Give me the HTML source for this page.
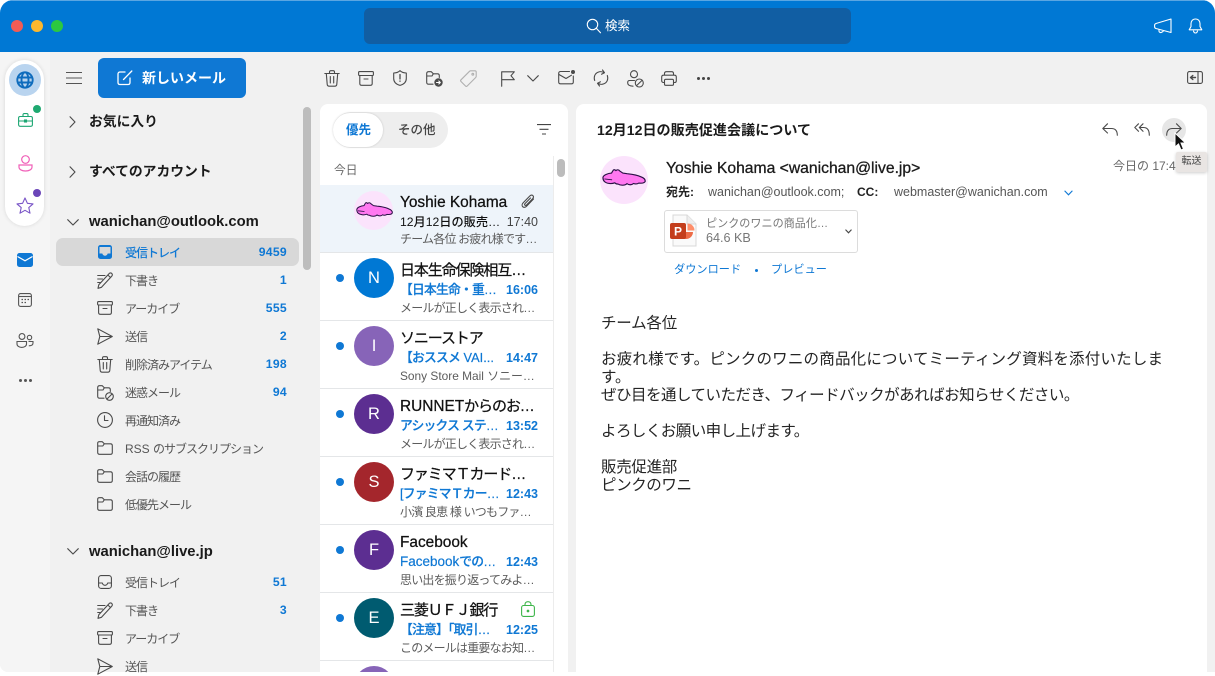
<!DOCTYPE html>
<html lang="ja"><head><meta charset="utf-8"><title>Outlook</title>
<style>
html,body{margin:0;padding:0;background:#fff}
body{width:1215px;height:672px;overflow:hidden;position:relative;font-family:"Liberation Sans","Noto Sans CJK JP",sans-serif;color:#1a1a1a}
.a{position:absolute;white-space:nowrap}
.t{position:absolute;white-space:nowrap;line-height:18px;height:18px}
svg{position:absolute;overflow:visible}
.ic{fill:none;stroke:#4a4a4a;stroke-width:1.1;stroke-linecap:round;stroke-linejoin:round}
.fl{font-size:12px;letter-spacing:-1px;margin-top:.5px;color:#555;left:125px}
.l0{letter-spacing:0}
.ct{font-size:12.2px;font-weight:700;color:#0f78d4;right:928px;letter-spacing:.3px}
.row{position:absolute;left:320px;width:233px;height:67px;border-bottom:1.5px solid #e4e6e8;background:#fff}
.av{position:absolute;left:354px;width:40px;height:40px;border-radius:50%;color:#fff;font-size:16.5px;line-height:40px;text-align:center}
.dot{position:absolute;left:336px;width:8px;height:8px;border-radius:50%;background:#0f78d4}
.nm{font-size:15px;letter-spacing:-1.1px;margin-top:-.5px;color:#111;left:400px;-webkit-text-stroke:.25px #111}
.la{font-size:15.4px;letter-spacing:0}
.sb{font-size:12.8px;letter-spacing:-.8px;margin-top:-.5px;font-weight:500;color:#0f78d4;left:400px;-webkit-text-stroke:.2px #0f78d4}
.tm{font-size:12.5px;font-weight:700;color:#0f78d4;right:677px;margin-top:-.5px}
.pv{font-size:12px;letter-spacing:-.8px;margin-top:-.5px;color:#5c5c5c;left:400px}
.bd{font-size:15.5px;color:#242424;left:601px}
</style></head><body>

<!-- window -->
<div class="a" style="left:0;top:0;width:1215px;height:672px;border-radius:13px 13px 0 8px;background:#f1f1f1;overflow:hidden">
  <div class="a" style="left:0;top:0;width:1215px;height:52px;background:#0078d4;border-top:1px solid #5aa6e2;box-sizing:border-box"></div>
  <div class="a" style="left:0;top:52px;width:50px;height:620px;background:#f5f5f5"></div>
</div>

<!-- traffic lights -->
<div class="a" style="left:11px;top:20px;width:12px;height:12px;border-radius:50%;background:#f25c54"></div>
<div class="a" style="left:31px;top:20px;width:12px;height:12px;border-radius:50%;background:#fdb82e"></div>
<div class="a" style="left:51px;top:20px;width:12px;height:12px;border-radius:50%;background:#2cc840"></div>

<!-- search -->
<div class="a" style="left:364px;top:8px;width:487px;height:36px;border-radius:6px;background:#115ea3"></div>
<svg style="left:586px;top:18px" width="16" height="16" viewBox="0 0 16 16" fill="none" stroke="#fff" stroke-width="1.1" stroke-linecap="round"><circle cx="6.500" cy="6.500" r="5.200"/><path d="M10.300 10.300L14.500 14.800"/></svg>
<div class="t" style="left:605px;top:17px;font-size:12.5px;color:#fff">検索</div>

<!-- title right icons -->
<svg style="left:1154px;top:18px" width="18" height="16" viewBox="0 0 18 16" fill="none" stroke="#fff" stroke-width="1.1" stroke-linejoin="round"><path d="M17 1L2 5.500C1 5.800.6 6.300.6 7.300V8.700C.6 9.700 1 10.200 2 10.500L17 14.500Z"/><path d="M5 11.300V13C5 14 6 14.800 7.200 14.500L9.500 13.300"/></svg>
<svg style="left:1188px;top:18px" width="15" height="16" viewBox="0 0 15 16" fill="none" stroke="#fff" stroke-width="1.1" stroke-linejoin="round" stroke-linecap="round"><path d="M7.500 1C4.700 1 3 3 3 5.600V8.500L1.200 11.800H13.800L12 8.500V5.600C12 3 10.300 1 7.500 1Z"/><path d="M5.500 13C5.800 14.300 6.500 15 7.500 15S9.200 14.300 9.500 13"/></svg>

<!-- app rail pill -->
<div class="a" style="left:5px;top:60px;width:39px;height:166px;border-radius:20px;background:#fff;box-shadow:0 0 4px rgba(0,0,0,.12)"></div>
<div class="a" style="left:9px;top:64px;width:32px;height:32px;border-radius:50%;background:#b9d4ef"></div>
<svg style="left:16px;top:71px" width="18" height="18" viewBox="0 0 18 18" fill="none" stroke="#0f6cbd" stroke-width="1.900"><circle cx="9" cy="9" r="7.700"/><ellipse cx="9" cy="9" rx="3.500" ry="7.700"/><path d="M1.500 6.500H16.500M1.500 11.500H16.500"/></svg>
<svg style="left:18px;top:113px" width="15" height="14" viewBox="0 0 15 14" fill="none" stroke="#1ba672" stroke-width="1.100"><rect x=".6" y="3.500" width="13.800" height="9.800" rx="1.500"/><path d="M5 3.500V1.800C5 1 5.500.6 6.200.6H8.800C9.500.6 10 1 10 1.800V3.500M.6 8H14.400"/><rect x="6.500" y="7" width="2" height="2" fill="#1ba672"/></svg>
<div class="a" style="left:33px;top:105px;width:8px;height:8px;border-radius:50%;background:#1fa971"></div>
<svg style="left:18px;top:155px" width="15" height="17" viewBox="0 0 15 17" fill="none" stroke="#f060b8" stroke-width="1.200"><circle cx="7.500" cy="4.500" r="3.800"/><path d="M1 10H14V12C14 14.500 11 16 7.500 16S1 14.500 1 12Z"/></svg>
<svg style="left:16px;top:197px" width="18" height="17" viewBox="0 0 18 17" fill="none" stroke="#7a55c7" stroke-width="1.100" stroke-linejoin="round"><path d="M9 1L11.400 6.300L17 6.900L12.800 10.600L14 16.200L9 13.300L4 16.200L5.200 10.600L1 6.900L6.600 6.300Z"/></svg>
<div class="a" style="left:33px;top:189px;width:8px;height:8px;border-radius:50%;background:#6b45b8"></div>

<!-- rail lower icons -->
<svg style="left:17px;top:253px" width="16" height="14" viewBox="0 0 16 14"><rect width="16" height="14" rx="2.500" fill="#0f78d4"/><path d="M.5 3.500L8 7.800L15.500 3.500" fill="none" stroke="#fff" stroke-width="1.200"/></svg>
<svg style="left:18px;top:293px" width="14" height="14" viewBox="0 0 14 14" fill="none" stroke="#555" stroke-width="1.100"><rect x=".6" y=".6" width="12.800" height="12.800" rx="2"/><path d="M.6 3.500H13.400"/><path d="M3.500 6.500H5M6.500 6.500H8M9.500 6.500H11M3.500 9.500H5M6.500 9.500H8" stroke-width="1.300"/></svg>
<svg style="left:16px;top:333px" width="18" height="15" viewBox="0 0 18 15" fill="none" stroke="#555" stroke-width="1.100"><circle cx="6" cy="3.500" r="2.900"/><circle cx="13.500" cy="4.500" r="2.200"/><path d="M1 8.500H10.500V11C10.500 13 8.500 14.400 5.800 14.400S1 13 1 11Z"/><path d="M12.500 8.500H17V10C17 11.800 15.500 12.800 12.800 12.800"/></svg>
<div class="a" style="left:19px;top:379px;width:3px;height:3px;border-radius:50%;background:#555;box-shadow:5px 0 0 #555,10px 0 0 #555"></div>

<!-- hamburger + new mail -->
<svg style="left:66px;top:72px" width="16" height="12" viewBox="0 0 16 12" stroke="#555" stroke-width="1.100"><path d="M0 .5H16M0 6H16M0 11.500H16"/></svg>
<div class="a" style="left:98px;top:58px;width:148px;height:40px;border-radius:6px;background:#0f78d4"></div>
<svg style="left:117px;top:70px" width="16" height="16" viewBox="0 0 16 16" fill="none" stroke="#fff" stroke-width="1.300" stroke-linecap="round"><path d="M8 2H3C1.800 2 1 2.800 1 4V12.500C1 13.700 1.800 14.500 3 14.500H11C12.200 14.500 13 13.700 13 12.500V8"/><path d="M6.500 9.500L14.800 1"/></svg>
<div class="t" style="left:142px;top:69px;font-size:14px;font-weight:700;color:#fff">新しいメール</div>

<!-- toolbar icons -->
<svg class="ic" style="left:324px;top:70px" width="16" height="17" viewBox="0 0 16 17"><path d="M.8 3.500H15.200M5.500 3.500V2C5.500 1.200 6 .7 6.800.7H9.200C10 .7 10.500 1.200 10.500 2V3.500M2.300 3.500L3.200 14.300C3.300 15.500 4 16.200 5.200 16.200H10.800C12 16.200 12.700 15.500 12.800 14.300L13.700 3.500M6.300 6.500V13M9.700 6.500V13"/></svg>
<svg class="ic" style="left:358px;top:71px" width="16" height="15" viewBox="0 0 16 15"><rect x=".6" y=".6" width="14.800" height="3.900" rx="1"/><path d="M1.800 4.500V12.500C1.800 13.600 2.500 14.300 3.600 14.300H12.400C13.500 14.300 14.200 13.600 14.200 12.500V4.500M6 8H10"/></svg>
<svg class="ic" style="left:393px;top:70px" width="14" height="16" viewBox="0 0 14 16"><path d="M7 .7C5 2.500 3 3 .7 3V8.500C.7 12 3 14.300 7 15.400C11 14.300 13.300 12 13.300 8.500V3C11 3 9 2.500 7 .7Z"/><path d="M7 4.500V9M7 11V11.300" stroke-width="1.300"/></svg>
<svg class="ic" style="left:426px;top:71px" width="17" height="16" viewBox="0 0 17 16"><path d="M7 13.200H2.500C1.400 13.200.7 12.500.7 11.400V2.500C.7 1.400 1.400.7 2.500.7H5.300L7.300 2.800H11.500C12.600 2.800 13.300 3.500 13.300 4.600V6.500M.7 5H6L7.300 2.800"/><circle cx="12.500" cy="11.500" r="4.200" fill="#4a4a4a" stroke="none"/><path d="M10.500 11.500H14.200M12.800 10L14.300 11.500L12.800 13" stroke="#fff"/></svg>
<svg style="left:460px;top:70px" width="17" height="17" viewBox="0 0 17 17" fill="none" stroke="#b0b0b0" stroke-width="1.100" stroke-linejoin="round"><path d="M1 9.800L9.500 1.300C9.800 1 10.200.8 10.600.8H15C15.700.8 16.200 1.300 16.200 2V6.400C16.200 6.800 16 7.200 15.700 7.500L7.200 16C6.700 16.500 6 16.500 5.500 16L1 11.500C.5 11 .5 10.300 1 9.800Z"/><circle cx="12.800" cy="4.200" r=".9"/></svg>
<svg class="ic" style="left:501px;top:71px" width="14" height="16" viewBox="0 0 14 16"><path d="M.7 15.300V.8H13.300L10 4.700L13.300 8.700H.7"/></svg>
<svg class="ic" style="left:527px;top:75px" width="12" height="7" viewBox="0 0 12 7"><path d="M.7.7L6 6L11.300.7"/></svg>
<svg class="ic" style="left:558px;top:70px" width="18" height="15" viewBox="0 0 18 15"><path d="M11.500 1.500H2.500C1.400 1.500.7 2.200.7 3.300V12C.7 13.100 1.400 13.800 2.500 13.800H13.500C14.600 13.800 15.300 13.100 15.300 12V6"/><path d="M1 4.500L8 8.500L13.500 5.200"/><circle cx="15" cy="2" r="2" fill="#4a4a4a" stroke="none"/></svg>
<svg class="ic" style="left:593px;top:69px" width="16" height="18" viewBox="0 0 16 18"><path d="M1.700 11.500C.5 8 1.800 4.500 5 3.200C7 2.400 9.500 2.600 11 3.800M9.500 1L11.500 3.700L8.500 5.200M14.300 6.500C15.500 10 14.200 13.500 11 14.800C9 15.600 6.500 15.400 5 14.200M6.500 17L4.500 14.300L7.500 12.800"/></svg>
<svg class="ic" style="left:627px;top:70px" width="17" height="18" viewBox="0 0 17 18"><circle cx="7" cy="4.200" r="3.500"/><path d="M7.500 10.500H2.500C1.400 10.500.7 11.200.7 12.300V13C.7 14.800 2.500 16 6 16.200"/><circle cx="12.300" cy="13" r="4"/><path d="M9.700 15.500L14.900 10.500"/></svg>
<svg class="ic" style="left:661px;top:71px" width="16" height="15" viewBox="0 0 16 15"><path d="M3.500 4V2.500C3.500 1.400 4.200.7 5.300.7H10.700C11.800.7 12.500 1.400 12.500 2.500V4"/><path d="M3.500 11.500H2.500C1.400 11.500.7 10.800.7 9.700V6C.7 4.900 1.400 4.200 2.500 4.200H13.500C14.600 4.200 15.300 4.900 15.300 6V9.700C15.300 10.800 14.600 11.500 13.500 11.500H12.500"/><rect x="3.500" y="8.300" width="9" height="6" rx="1.200"/></svg>
<div class="a" style="left:697px;top:77px;width:3px;height:3px;border-radius:50%;background:#444;box-shadow:5px 0 0 #444,10px 0 0 #444"></div>
<svg class="ic" style="left:1187px;top:71px" width="16" height="13" viewBox="0 0 16 13"><rect x=".6" y=".6" width="14.800" height="11.800" rx="1.800"/><path d="M11 .6V12.400"/><path d="M8.500 6.500H3.500M5.800 4.500L3.500 6.500L5.800 8.500" stroke-width="1.400"/></svg>

<!-- folder pane -->
<div class="a" style="left:303px;top:107px;width:8px;height:163px;border-radius:4px;background:#bdbdbd"></div>
<svg class="ic" style="left:69px;top:116px" width="7" height="12" viewBox="0 0 7 12"><path d="M1 .8L6 6L1 11.200"/></svg>
<div class="t" style="left:89px;top:113px;font-size:13.8px;font-weight:700">お気に入り</div>
<svg class="ic" style="left:69px;top:166px" width="7" height="12" viewBox="0 0 7 12"><path d="M1 .8L6 6L1 11.200"/></svg>
<div class="t" style="left:89px;top:163px;font-size:13.8px;font-weight:700">すべてのアカウント</div>
<svg class="ic" style="left:67px;top:219px" width="12" height="7" viewBox="0 0 12 7"><path d="M.7.7L6 6L11.300.7"/></svg>
<div class="t" style="left:89px;top:213px;font-size:14.8px;font-weight:700">wanichan@outlook.com</div>

<div class="a" style="left:56px;top:238px;width:243px;height:28px;border-radius:7px;background:#d8d8d8"></div>
<svg style="left:98px;top:245px" width="14" height="14" viewBox="0 0 14 14"><rect width="14" height="14" rx="2.500" fill="#0f78d4"/><path d="M1.500 8.500H4.300C4.800 10 5.700 10.700 7 10.700S9.200 10 9.700 8.500H12.500V2H1.500Z" fill="#d8d8d8"/></svg>
<div class="t fl" style="top:243px;color:#0f78d4;font-weight:500">受信トレイ</div><div class="t ct" style="top:243px">9459</div>

<svg class="ic" style="left:97px;top:272px" width="16" height="17" viewBox="0 0 16 17"><path d="M.7 3.500H8M.7 7H5.500M.7 10.500H3.500M1 16.300L1.800 12.800L12 1.700C12.800.8 14 .7 14.800 1.500C15.600 2.300 15.500 3.400 14.700 4.200L4.500 15.300L1 16.300ZM10.800 3L13.500 5.500"/></svg>
<div class="t fl" style="top:271px">下書き</div><div class="t ct" style="top:271px">1</div>

<svg class="ic" style="left:97px;top:301px" width="16" height="14" viewBox="0 0 16 14"><rect x=".6" y=".6" width="14.800" height="3.400" rx="1"/><path d="M1.600 4V11.500C1.600 12.600 2.300 13.300 3.400 13.300H12.600C13.700 13.300 14.400 12.600 14.400 11.500V4M6 7.500H10"/></svg>
<div class="t fl" style="top:299px">アーカイブ</div><div class="t ct" style="top:299px">555</div>

<svg class="ic" style="left:97px;top:328px" width="16" height="17" viewBox="0 0 16 17"><path d="M.8.8L15.300 8.500L.8 16.200L2.800 8.500ZM2.800 8.500H15.300"/></svg>
<div class="t fl" style="top:327px">送信</div><div class="t ct" style="top:327px">2</div>

<svg class="ic" style="left:97px;top:356px" width="16" height="17" viewBox="0 0 16 17"><path d="M.8 3.500H15.200M5.500 3.500V2C5.500 1.200 6 .7 6.800.7H9.200C10 .7 10.500 1.200 10.500 2V3.500M2.300 3.500L3.200 14.300C3.300 15.500 4 16.200 5.200 16.200H10.800C12 16.200 12.700 15.500 12.800 14.300L13.700 3.500M6.300 6.500V13M9.700 6.500V13"/></svg>
<div class="t fl" style="top:355px">削除済みアイテム</div><div class="t ct" style="top:355px">198</div>

<svg class="ic" style="left:97px;top:385px" width="17" height="16" viewBox="0 0 17 16"><path d="M7 13.200H2.500C1.400 13.200.7 12.500.7 11.400V2.500C.7 1.400 1.400.7 2.500.7H5.300L7.300 2.800H11.500C12.600 2.800 13.300 3.500 13.300 4.600V6.500M.7 5H6L7.300 2.800"/><circle cx="12.500" cy="11.500" r="3.800"/><path d="M10 14L15 9"/></svg>
<div class="t fl" style="top:383px">迷惑メール</div><div class="t ct" style="top:383px">94</div>

<svg class="ic" style="left:97px;top:412px" width="16" height="16" viewBox="0 0 16 16"><circle cx="8" cy="8" r="7.400"/><path d="M7.500 3.800V8.500H11"/></svg>
<div class="t fl" style="top:411px">再通知済み</div>

<svg class="ic" style="left:97px;top:441px" width="16" height="14" viewBox="0 0 16 14"><path d="M.7 11.500V2C.7 1.200 1.300.7 2.300.7H5.300L7.300 2.800H13.500C14.600 2.800 15.300 3.500 15.300 4.600V11.500C15.300 12.600 14.600 13.300 13.500 13.300H2.500C1.400 13.300.7 12.600.7 11.500ZM.7 5H5.800L7.300 2.800"/></svg>
<div class="t fl" style="top:439px"><span class="l0">RSS </span>のサブスクリプション</div>
<svg class="ic" style="left:97px;top:469px" width="16" height="14" viewBox="0 0 16 14"><path d="M.7 11.500V2C.7 1.200 1.300.7 2.300.7H5.300L7.300 2.800H13.500C14.600 2.800 15.300 3.500 15.300 4.600V11.500C15.300 12.600 14.600 13.300 13.500 13.300H2.500C1.400 13.300.7 12.600.7 11.500ZM.7 5H5.800L7.300 2.800"/></svg>
<div class="t fl" style="top:467px">会話の履歴</div>
<svg class="ic" style="left:97px;top:497px" width="16" height="14" viewBox="0 0 16 14"><path d="M.7 11.500V2C.7 1.200 1.300.7 2.300.7H5.300L7.300 2.800H13.500C14.600 2.800 15.300 3.500 15.300 4.600V11.500C15.300 12.600 14.600 13.300 13.500 13.300H2.500C1.400 13.300.7 12.600.7 11.500ZM.7 5H5.800L7.300 2.800"/></svg>
<div class="t fl" style="top:495px">低優先メール</div>

<svg class="ic" style="left:67px;top:548px" width="12" height="7" viewBox="0 0 12 7"><path d="M.7.7L6 6L11.300.7"/></svg>
<div class="t" style="left:89px;top:543px;font-size:14.8px;font-weight:700">wanichan@live.jp</div>

<svg class="ic" style="left:98px;top:575px" width="14" height="14" viewBox="0 0 14 14"><rect x=".6" y=".6" width="12.800" height="12.800" rx="2.500"/><path d="M.6 8H4.300C4.800 9.500 5.700 10.300 7 10.300S9.200 9.500 9.700 8H13.400"/></svg>
<div class="t fl" style="top:573px">受信トレイ</div><div class="t ct" style="top:573px">51</div>
<svg class="ic" style="left:97px;top:602px" width="16" height="17" viewBox="0 0 16 17"><path d="M.7 3.500H8M.7 7H5.500M.7 10.500H3.500M1 16.300L1.800 12.800L12 1.700C12.800.8 14 .7 14.800 1.500C15.600 2.300 15.500 3.400 14.700 4.200L4.500 15.300L1 16.300ZM10.800 3L13.500 5.500"/></svg>
<div class="t fl" style="top:601px">下書き</div><div class="t ct" style="top:601px">3</div>
<svg class="ic" style="left:97px;top:631px" width="16" height="14" viewBox="0 0 16 14"><rect x=".6" y=".6" width="14.800" height="3.400" rx="1"/><path d="M1.600 4V11.500C1.600 12.600 2.300 13.300 3.400 13.300H12.600C13.700 13.300 14.400 12.600 14.400 11.500V4M6 7.500H10"/></svg>
<div class="t fl" style="top:629px">アーカイブ</div>
<svg class="ic" style="left:97px;top:658px" width="16" height="17" viewBox="0 0 16 17"><path d="M.8.8L15.300 8.500L.8 16.200L2.800 8.500ZM2.800 8.500H15.300"/></svg>
<div class="t fl" style="top:657px">送信</div>

<!-- message list -->
<div class="a" style="left:320px;top:104px;width:248px;height:568px;background:#fff;border-radius:8px 8px 0 0"></div>
<div class="a" style="left:333px;top:112px;width:115px;height:36px;border-radius:18px;background:#eeeeee"></div>
<div class="a" style="left:333px;top:113px;width:50px;height:34px;border-radius:17px;background:#fff;box-shadow:0 0 2px rgba(0,0,0,.18)"></div>
<div class="t" style="left:346px;top:121px;font-size:12.5px;font-weight:700;color:#0f78d4">優先</div>
<div class="t" style="left:398px;top:121px;font-size:12.5px;color:#444;font-weight:500">その他</div>
<svg style="left:537px;top:124px" width="14" height="11" viewBox="0 0 14 11" stroke="#444" stroke-width="1.100"><path d="M0 .6H14M2.500 5.300H11.500M5 10H9"/></svg>
<div class="a" style="left:553px;top:156px;width:1px;height:516px;background:#ececec"></div>
<div class="a" style="left:557px;top:159px;width:8px;height:18px;border-radius:4px;background:#bcbcbc"></div>
<div class="t" style="left:334px;top:162px;font-size:11.7px;color:#666">今日</div>

<!-- selected row -->
<div class="row" style="top:185px;background:#eef4fa"></div>
<div class="a" style="left:354px;top:191px;width:39px;height:39px;border-radius:50%;background:#fbe3fc"></div>
<svg style="left:355.500px;top:201.500px" width="37" height="15" viewBox="0 0 37 15"><path d="M.8 7.500C1 5.500 5 3.800 8 3.600L9.500 1C10.300.4 11 .6 11.700 1.500C12.500.5 14 .4 15 1.800L17.500 3.600L21 4.100C25 4.500 30 5.500 33 7C35.500 8 36.500 9.500 36.300 11C35.500 12.500 33.500 12.700 31 12.400C29.500 13.400 27.500 13.200 26.500 12.800C25 14.300 22.500 14.200 21 12.900C19.500 14.600 15.500 14.700 13.500 13.300C12.500 13.300 11.500 13 10.800 12.200C8 13.300 4 13 2 11C1 10 .8 8.800.8 7.500Z" fill="#ff78f0" stroke="#2a1045" stroke-width="1" stroke-linejoin="round"/><path d="M2 8.800L8.500 9.500" fill="none" stroke="#2a1045" stroke-width=".8"/></svg>
<div class="t nm la" style="top:194px">Yoshie Kohama</div>
<svg class="ic" style="left:521px;top:194px;" width="14" height="15" viewBox="0 0 14 15"><path d="M12.500 5L5.800 12C4.500 13.500 2.700 13.700 1.700 12.700C.7 11.700 1 10 2.200 8.700L8.800 2C9.800 1 11 .8 11.900 1.600C12.800 2.500 12.500 3.700 11.600 4.700L5.500 11C5 11.500 4.300 11.600 3.900 11.100C3.500 10.700 3.600 10 4.100 9.500L9.500 4"/></svg>
<div class="t" style="left:400px;top:212.500px;font-size:12.2px;font-weight:500;color:#111">12月12日の販売…</div>
<div class="t" style="right:677px;top:212.500px;font-size:12.5px;color:#444">17:40</div>
<div class="t pv" style="top:230px">チーム各位 お疲れ様です…</div>

<!-- rows -->
<div class="row" style="top:253px"></div><div class="dot" style="top:274px"></div>
<div class="av" style="top:258px;background:#0078d4">N</div>
<div class="t nm" style="top:262px">日本生命保険相互…</div>
<div class="t sb" style="top:281px">【日本生命・重…</div><div class="t tm" style="top:281px">16:06</div>
<div class="t pv" style="top:299px">メールが正しく表示され…</div>

<div class="row" style="top:321px"></div><div class="dot" style="top:342px"></div>
<div class="av" style="top:326px;background:#8764b8">I</div>
<div class="t nm" style="top:330px">ソニーストア</div>
<div class="t sb" style="top:349px">【おススメ<span class="l0"> VAI...</span></div><div class="t tm" style="top:349px">14:47</div>
<div class="t pv" style="top:367px;font-size:11.9px;letter-spacing:0">Sony Store Mail ソニー…</div>

<div class="row" style="top:389px"></div><div class="dot" style="top:410px"></div>
<div class="av" style="top:394px;background:#5c2e91">R</div>
<div class="t nm" style="top:398px"><span class="la">RUNNET</span>からのお…</div>
<div class="t sb" style="top:417px">アシックス ステ…</div><div class="t tm" style="top:417px">13:52</div>
<div class="t pv" style="top:435px">メールが正しく表示され…</div>

<div class="row" style="top:457px"></div><div class="dot" style="top:478px"></div>
<div class="av" style="top:462px;background:#a4262c">S</div>
<div class="t nm" style="top:466px">ファミマＴカード…</div>
<div class="t sb" style="top:485px">[ファミマＴカー…</div><div class="t tm" style="top:485px">12:43</div>
<div class="t pv" style="top:503px">小濱 良恵 様 いつもファ…</div>

<div class="row" style="top:525px"></div><div class="dot" style="top:546px"></div>
<div class="av" style="top:530px;background:#5c2e91">F</div>
<div class="t nm la" style="top:534px">Facebook</div>
<div class="t sb" style="top:553px"><span class="l0" style="font-size:13.5px">Facebook</span>での…</div><div class="t tm" style="top:553px">12:43</div>
<div class="t pv" style="top:571px">思い出を振り返ってみよ…</div>

<div class="row" style="top:593px"></div><div class="dot" style="top:614px"></div>
<div class="av" style="top:598px;background:#005b70">E</div>
<div class="t nm" style="top:602px">三菱ＵＦＪ銀行</div>
<svg style="left:521px;top:601px" width="14" height="16" viewBox="0 0 14 16" fill="none" stroke="#3db54a" stroke-width="1.100"><rect x=".6" y="4.500" width="12.800" height="10.900" rx="2"/><path d="M4 4.500V3.500C4 1.800 5.200.7 7 .7S10 1.800 10 3.500V4.500"/><circle cx="7" cy="10" r=".8" fill="#3db54a"/></svg>
<div class="t sb" style="top:621px">【注意】「取引…</div><div class="t tm" style="top:621px">12:25</div>
<div class="t pv" style="top:639px">このメールは重要なお知…</div>

<div class="a" style="left:354px;top:666px;width:40px;height:6px;overflow:hidden"><div style="width:40px;height:40px;border-radius:50%;background:#8764b8"></div></div>

<!-- reading pane -->
<div class="a" style="left:576px;top:104px;width:631px;height:568px;background:#fff;border-radius:8px 8px 0 0"></div>
<div class="t" style="left:597px;top:121px;font-size:14.1px;font-weight:700;color:#1a1a1a">12月12日の販売促進会議について</div>

<svg class="ic" style="left:1102px;top:123px" width="16" height="13" viewBox="0 0 16 13"><path d="M5.500.8L.8 5.500L5.500 10M.8 5.500H9.500C13 5.500 15.300 7.500 15.300 12.300"/></svg>
<svg class="ic" style="left:1134px;top:123px" width="16" height="13" viewBox="0 0 16 13"><path d="M4.500.8L.8 4.500L4.500 8.300M9 .8L5.300 4.500L9 8.300M5.300 4.500H9.500C13 4.500 15.300 7 15.300 12.300"/></svg>
<div class="a" style="left:1162px;top:118px;width:24px;height:24px;border-radius:50%;background:#e6e6e6"></div>
<svg class="ic" style="left:1166px;top:123px" width="16" height="13" viewBox="0 0 16 13"><path d="M10.500.8L15.200 5.500L10.500 10M15.200 5.500H6.500C3 5.500.7 7.500.7 12.300"/></svg>

<!-- sender -->
<div class="a" style="left:600px;top:156px;width:48px;height:48px;border-radius:50%;background:#fbe3fc"></div>
<svg style="left:601.500px;top:169px" width="44" height="17" viewBox="0 0 37 15" preserveAspectRatio="none"><path d="M.8 7.500C1 5.500 5 3.800 8 3.600L9.500 1C10.300.4 11 .6 11.700 1.500C12.500.5 14 .4 15 1.800L17.500 3.600L21 4.100C25 4.500 30 5.500 33 7C35.500 8 36.500 9.500 36.300 11C35.500 12.500 33.500 12.700 31 12.400C29.500 13.400 27.500 13.200 26.500 12.800C25 14.300 22.500 14.200 21 12.900C19.500 14.600 15.500 14.700 13.500 13.300C12.500 13.300 11.500 13 10.800 12.200C8 13.300 4 13 2 11C1 10 .8 8.800.8 7.500Z" fill="#ff78f0" stroke="#2a1045" stroke-width="1" stroke-linejoin="round"/><path d="M2 8.800L8.500 9.500" fill="none" stroke="#2a1045" stroke-width=".8"/></svg>
<div class="t" style="left:666px;top:160px;font-size:15.7px;color:#1a1a1a;-webkit-text-stroke:.3px #1a1a1a">Yoshie Kohama &lt;wanichan@live.jp&gt;</div>
<div class="t" style="left:666px;top:183px;font-size:12px;font-weight:700;color:#222">宛先:</div>
<div class="t" style="left:708px;top:183px;font-size:12.5px;color:#555">wanichan@outlook.com;</div>
<div class="t" style="left:857px;top:183px;font-size:12px;font-weight:700;color:#222">CC:</div>
<div class="t" style="left:894px;top:183px;font-size:12.5px;color:#555">webmaster@wanichan.com</div>
<svg style="left:1064px;top:190px" width="9" height="6" viewBox="0 0 9 6" fill="none" stroke="#0f78d4" stroke-width="1.100"><path d="M.6.8L4.500 4.800L8.400.8"/></svg>
<div class="t" style="left:1113px;top:157px;font-size:12px;color:#666;width:63px;overflow:hidden">今日の 17:40</div>

<!-- attachment -->
<div class="a" style="left:664px;top:210px;width:192px;height:41px;border:1px solid #dcdcdc;border-radius:3px;background:#fff"></div>
<svg style="left:669px;top:214px" width="28" height="33" viewBox="0 0 28 33"><path d="M4 1H18L27 10V32H4Z" fill="#fafafa" stroke="#d8d8d8"/><path d="M18 1V10H27" fill="#eee" stroke="#d8d8d8"/><path d="M17 11a7 7 0 1 0 7 7h-7Z" fill="#ed6c47"/><path d="M18.500 9.500a7 7 0 0 1 7 7h-7Z" fill="#ff8f6b"/><rect x="1" y="9" width="16" height="16" rx="2" fill="#c43e1c"/><text x="9" y="21.500" font-family="Liberation Sans" font-size="12" font-weight="700" fill="#fff" text-anchor="middle">P</text></svg>
<div class="t" style="left:706px;top:214.500px;font-size:11.1px;color:#777">ピンクのワニの商品化…</div>
<div class="t" style="left:706px;top:228.500px;font-size:12.6px;color:#777">64.6 KB</div>
<svg style="left:845px;top:229px" width="7" height="5" viewBox="0 0 7 5" fill="none" stroke="#444" stroke-width="1.100"><path d="M.5.6L3.500 3.800L6.500.6"/></svg>
<div class="t" style="left:674px;top:260.500px;font-size:11.2px;color:#0f78d4">ダウンロード</div>
<div class="a" style="left:755px;top:269px;width:3px;height:3px;border-radius:50%;background:#0f78d4"></div>
<div class="t" style="left:771px;top:260.500px;font-size:11.2px;color:#0f78d4">プレビュー</div>

<!-- body -->
<div class="t bd" style="top:315px;letter-spacing:-.2px">チーム各位</div>
<div class="t bd" style="top:351px;letter-spacing:.2px">お疲れ様です。ピンクのワニの商品化についてミーティング資料を添付いたしま</div>
<div class="t bd" style="top:369px">す。</div>
<div class="t bd" style="top:387px;letter-spacing:-.5px">ぜひ目を通していただき、フィードバックがあればお知らせください。</div>
<div class="t bd" style="top:423px;letter-spacing:-.55px">よろしくお願い申し上げます。</div>
<div class="t bd" style="top:459px;letter-spacing:-.3px">販売促進部</div>
<div class="t bd" style="top:477px;letter-spacing:-.4px">ピンクのワニ</div>

<!-- tooltip -->
<div class="a" style="left:1176px;top:152px;width:31px;height:20px;background:#e9e5e3;border-radius:2px;box-shadow:0 1px 3px rgba(0,0,0,.2);font-size:10px;line-height:20px;text-align:center;color:#444">転送</div>
<!-- cursor -->
<svg style="left:1174px;top:132px" width="13" height="19" viewBox="0 0 13 19"><path d="M1 1V15L4.500 12L7 18L9.500 17L7 11H11.500Z" fill="#111" stroke="#fff" stroke-width="1"/></svg>
</body></html>
